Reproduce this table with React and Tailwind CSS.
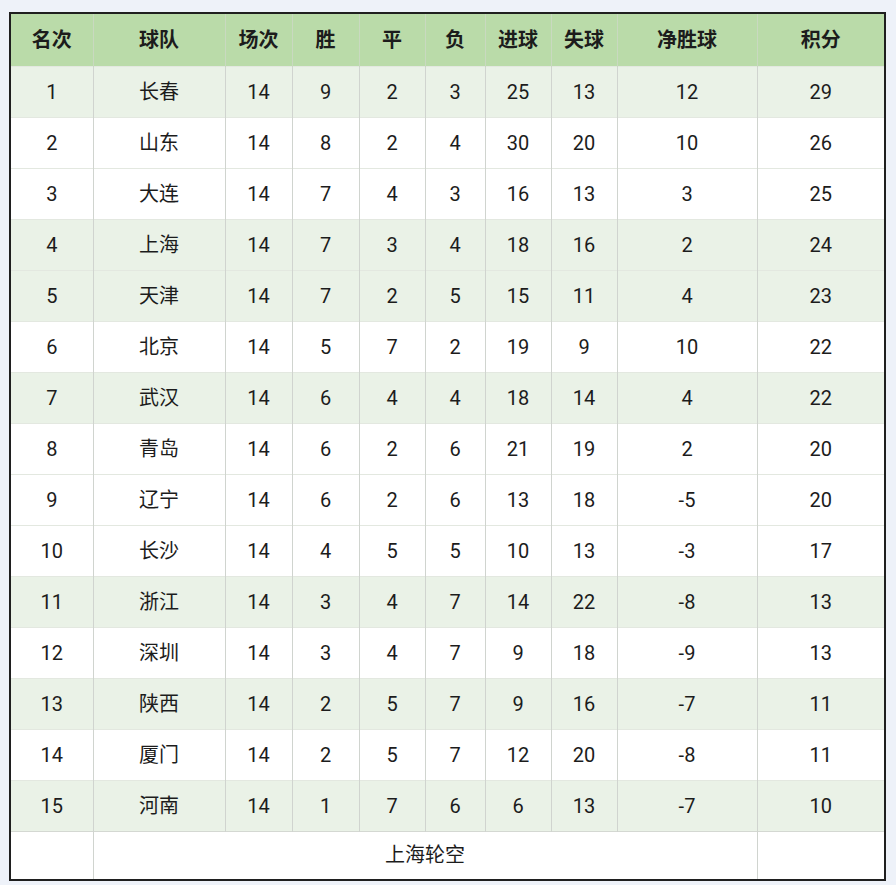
const rows = [
  [1, "长春", 14, 9, 2, 3, 25, 13, 12, 29, true],
  [2, "山东", 14, 8, 2, 4, 30, 20, 10, 26, false],
  [3, "大连", 14, 7, 4, 3, 16, 13, 3, 25, false],
  [4, "上海", 14, 7, 3, 4, 18, 16, 2, 24, true],
  [5, "天津", 14, 7, 2, 5, 15, 11, 4, 23, true],
  [6, "北京", 14, 5, 7, 2, 19, 9, 10, 22, false],
  [7, "武汉", 14, 6, 4, 4, 18, 14, 4, 22, true],
  [8, "青岛", 14, 6, 2, 6, 21, 19, 2, 20, false],
  [9, "辽宁", 14, 6, 2, 6, 13, 18, -5, 20, false],
  [10, "长沙", 14, 4, 5, 5, 10, 13, -3, 17, false],
  [11, "浙江", 14, 3, 4, 7, 14, 22, -8, 13, true],
  [12, "深圳", 14, 3, 4, 7, 9, 18, -9, 13, false],
  [13, "陕西", 14, 2, 5, 7, 9, 16, -7, 11, true],
  [14, "厦门", 14, 2, 5, 7, 12, 20, -8, 11, false],
  [15, "河南", 14, 1, 7, 6, 6, 13, -7, 10, true],
];

const headers = ["名次", "球队", "场次", "胜", "平", "负", "进球", "失球", "净胜球", "积分"];
const widths = [83, 132, 67, 67, 66, 60, 66, 66, 140, 128];

export default function App() {
  return (
    <div
      className="w-[896px] h-[885px] bg-[#eef2f9] pt-[12px] pl-[9px]"
      style={{ fontFamily: "Roboto, 'Noto Sans CJK SC', sans-serif" }}
    >
      <table className="table-fixed border-collapse border-2 border-[#1f1f1f] text-[20px] text-[#1c1c1c] bg-white">
        <colgroup>
          {widths.map((w, i) => (
            <col key={i} style={{ width: w }} />
          ))}
        </colgroup>
        <thead>
          <tr className="h-[53px] bg-[#badba9]">
            {headers.map((h, i) => (
              <th
                key={i}
                className="font-bold text-center border-r border-[#c9d9c0] last:border-r-0 p-0"
              >
                {h}
              </th>
            ))}
          </tr>
        </thead>
        <tbody>
          {rows.map((r) => (
            <tr
              key={r[0]}
              className={`h-[51px] border-t border-[#e3e8e0] ${r[10] ? "bg-[#eaf2e7]" : "bg-white"}`}
            >
              {r.slice(0, 10).map((c, i) => (
                <td
                  key={i}
                  className="text-center border-r border-[#d0d4cf] last:border-r-0 p-0"
                >
                  {c}
                </td>
              ))}
            </tr>
          ))}
          <tr className="h-[49px] bg-white border-t border-[#d4d8d2]">
            <td className="border-r border-[#d0d4cf] p-0"></td>
            <td colSpan={8} className="text-center border-r border-[#d0d4cf] p-0">
              上海轮空
            </td>
            <td className="p-0"></td>
          </tr>
        </tbody>
      </table>
    </div>
  );
}
